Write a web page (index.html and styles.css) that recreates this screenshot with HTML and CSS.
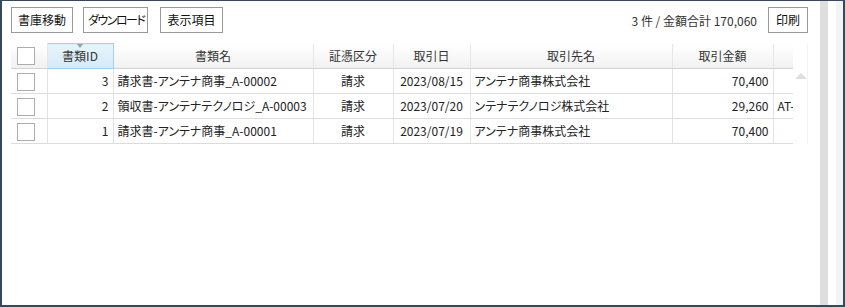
FILE: index.html
```html
<!DOCTYPE html>
<html lang="ja">
<head>
  <meta charset="UTF-8">
  <meta name="viewport" content="width=device-width, initial-scale=1.0">
  <title>書類一覧</title>
  <link rel="stylesheet" href="styles.css">
</head>
<body>
  <div class="frame">
    <div class="main">
      <div class="toolbar">
        <button type="button" class="btn">書庫移動</button>
        <button type="button" class="btn btn-kana">ダウンロード</button>
        <button type="button" class="btn">表示項目</button>
        <span class="summary">3 件 / 金額合計 170,060</span>
        <button type="button" class="btn btn-print">印刷</button>
      </div>

      <div class="grid-wrap">
        <table class="grid">
          <colgroup>
            <col class="c-check">
            <col class="c-id">
            <col class="c-name">
            <col class="c-kind">
            <col class="c-date">
            <col class="c-partner">
            <col class="c-amount">
            <col class="c-extra">
          </colgroup>
          <thead>
            <tr>
              <th class="cell-check"><span class="checkbox"></span></th>
              <th class="sorted">書類ID</th>
              <th>書類名</th>
              <th>証憑区分</th>
              <th>取引日</th>
              <th>取引先名</th>
              <th>取引金額</th>
              <th></th>
            </tr>
          </thead>
          <tbody>
            <tr>
              <td class="cell-check"><span class="checkbox"></span></td>
              <td class="num">3</td>
              <td>請求書-アンテナ商事_A-00002</td>
              <td class="center">請求</td>
              <td class="center">2023/08/15</td>
              <td>アンテナ商事株式会社</td>
              <td class="num">70,400</td>
              <td></td>
            </tr>
            <tr>
              <td class="cell-check"><span class="checkbox"></span></td>
              <td class="num">2</td>
              <td>領収書-アンテナテクノロジ_A-00003</td>
              <td class="center">請求</td>
              <td class="center">2023/07/20</td>
              <td>ンテナテクノロジ株式会社</td>
              <td class="num">29,260</td>
              <td>AT-</td>
            </tr>
            <tr>
              <td class="cell-check"><span class="checkbox"></span></td>
              <td class="num">1</td>
              <td>請求書-アンテナ商事_A-00001</td>
              <td class="center">請求</td>
              <td class="center">2023/07/19</td>
              <td>アンテナ商事株式会社</td>
              <td class="num">70,400</td>
              <td></td>
            </tr>
          </tbody>
        </table>
        <div class="vscroll"><span class="arrow-up"></span></div>
      </div>
    </div>

    <div class="side-track"></div>
    <div class="side-gap"></div>
    <div class="side-track light"></div>
  </div>
</body>
</html>
```

FILE: styles.css
```css
html,
body {
  margin: 0;
  padding: 0;
  background-color: #fff;
}

body {
  font-family: "Noto Sans CJK JP", "Noto Sans", sans-serif;
  font-size: 12px;
  color: #222;
  font-feature-settings: "palt";
}

.frame {
  box-sizing: border-box;
  width: 845px;
  height: 307px;
  display: flex;
  border: 2px solid #34495e; /* dark slate window border */
  border-top-width: 1px;
}

.main {
  flex: 1;
  padding: 6px 12px 0 9px;
}

.toolbar {
  display: flex;
  align-items: center;
  height: 26px;
  margin-bottom: 10px;
}

.btn {
  box-sizing: border-box;
  height: 26px;
  min-width: 40px;
  padding: 0 6px;
  margin-right: 10px;
  background-color: #fff;
  border: 1px solid #999;
  border-radius: 0;
  font-family: inherit;
  font-size: 12px;
  font-feature-settings: "palt";
  color: #111;
  line-height: 24px;
}

/* katakana label: a bit tighter, like the narrow UI font */
.btn-kana {
  padding: 0 3px 0 4px;
  letter-spacing: -1.5px;
  margin-right: 12px;
}

.summary {
  margin-left: auto;
  margin-right: 11px;
  color: #333;
}

.btn-print {
  margin-right: 0;
}

/* grid */
.grid-wrap {
  display: flex;
  align-items: flex-start;
}

.grid {
  width: 782px;
  table-layout: fixed;
  border-collapse: collapse;
}

.c-check { width: 36px; }
.c-id { width: 66px; }
.c-name { width: 200px; }
.c-kind { width: 80px; }
.c-date { width: 77px; }
.c-partner { width: 202px; }
.c-amount { width: 101px; }
.c-extra { width: 20px; }

.grid th,
.grid td {
  height: 24px;
  padding: 0 4px;
  line-height: 24px;
  white-space: nowrap;
  overflow: hidden;
  font-weight: normal;
}

.grid th {
  background: linear-gradient(#ffffff, #f1f1f1);
  border-right: 1px solid #e6e6e6;
  border-bottom: 1px solid #d2d2d2;
  text-align: center;
  color: #333;
}

.grid th:last-child {
  border-right: none;
}

.grid th.sorted {
  position: relative;
  background: linear-gradient(#e8f4fc, #d4eaf8);
  border: 1px solid #9fd1f2;
}

.grid th.sorted::before {
  content: "";
  position: absolute;
  top: 0;
  left: 50%;
  margin-left: -3px;
  border-left: 3px solid transparent;
  border-right: 3px solid transparent;
  border-top: 4px solid #8ea3b6;
}

.grid td {
  border-right: 1px solid #e3e3e3;
  border-bottom: 1px solid #dcdcdc;
}

.grid td:last-child {
  border-right: none;
}

.grid .cell-check {
  padding: 0 0 0 6px;
  text-align: left;
}

.checkbox {
  display: inline-block;
  box-sizing: border-box;
  width: 18px;
  height: 18px;
  border: 1px solid #adadad;
  background-color: #fff;
  vertical-align: middle;
  margin-top: -2px;
}

.num {
  text-align: right;
}

.center {
  text-align: center;
}

.vscroll {
  box-sizing: border-box;
  width: 15px;
  height: 101px;
  padding-top: 30px;
  border-right: 1px solid #f3f3f3;
  display: flex;
  justify-content: center;
}

.arrow-up {
  width: 0;
  height: 0;
  margin-left: 2px;
  border-left: 6px solid transparent;
  border-right: 6px solid transparent;
  border-bottom: 6px solid #dedede;
}

/* outer scroll tracks on the right */
.side-track {
  width: 8px;
  background-color: #dedede;
}

.side-gap {
  width: 8px;
}

.side-track.light {
  width: 7px;
  background-color: #f4f4f4;
}
```
